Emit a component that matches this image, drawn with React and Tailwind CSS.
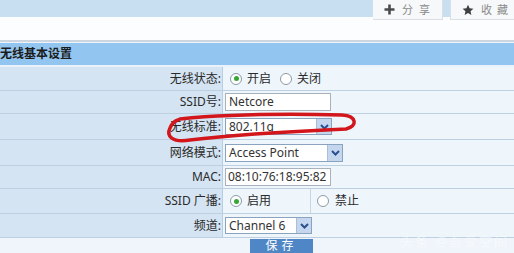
import React from "react";

function Radio({ checked }) {
  return (
    <span className="w-[12px] h-[12px] rounded-full border border-[#8d9aa6] bg-white flex items-center justify-center shrink-0">
      {checked ? <span className="w-[5px] h-[5px] rounded-full bg-[#33a833]" /> : null}
    </span>
  );
}

function Arrow() {
  return (
    <span className="w-[15px] h-full bg-[#c5d7ee] border-l border-[#a8bedb] flex items-center justify-center">
      <svg width="9" height="6" viewBox="0 0 9 6">
        <path d="M1 1 L4.5 4.5 L8 1" fill="none" stroke="#2a4f8f" strokeWidth="2" />
      </svg>
    </span>
  );
}

function Select({ value, w, h }) {
  return (
    <div className={`flex ${w} ${h} border border-[#8aa3bf] bg-white items-stretch`}>
      <span className="flex-1 pl-[3px] flex items-center leading-none text-[#333]">{value}</span>
      <Arrow />
    </div>
  );
}

function Row({ label, h, children }) {
  return (
    <div className={`flex ${h} border-b border-[#bdd0e1]`}>
      <div className="w-[223px] shrink-0 bg-[#d4e4f2] border-r border-[#b9cde0] flex items-center justify-end pr-[1px] leading-none">
        {label}
      </div>
      <div className="flex-1 bg-[#eef5fb] flex items-center pl-[2px]">{children}</div>
    </div>
  );
}

export default function App() {
  return (
    <div className="relative w-[514px] h-[253px] overflow-hidden bg-[#eff5fa] text-[12px] text-[#2a2a2a] font-['Noto_Sans','Noto_Sans_CJK_SC',sans-serif]">
      {/* top strip */}
      <div className="h-[17px] bg-[#c7dff1]" />
      <div className="h-[23px] bg-[#fbfdfe]" />
      <div className="h-[2px] bg-[#cdd6de]" />
      <div className="h-[1px] bg-[#eef4f9]" />
      <div className="h-[22px] bg-[#93c5f1] flex items-center">
        <span className="ml-0 font-bold text-[12px] leading-none text-[#1c1c1c] whitespace-nowrap">无线基本设置</span>
      </div>
      <div className="h-[2px] bg-[#e9f2fa]" />

      <Row label="无线状态:" h="h-[24px]">
        <div className="flex items-center ml-[5px]">
          <Radio checked />
          <span className="ml-[5px] leading-none">开启</span>
          <span className="ml-[9px]"><Radio /></span>
          <span className="ml-[5px] leading-none">关闭</span>
        </div>
      </Row>
      <Row label="SSID号:" h="h-[23px]">
        <div className="w-[106px] h-[18px] border border-[#a9b2ba] bg-white pl-[3px] flex items-center leading-none text-[#333]">Netcore</div>
      </Row>
      <Row label="无线标准:" h="h-[26px]">
        <Select value="802.11g" w="w-[107px]" h="h-[17px]" />
      </Row>
      <Row label="网络模式:" h="h-[26px]">
        <Select value="Access Point" w="w-[118px]" h="h-[18px]" />
      </Row>
      <Row label="MAC:" h="h-[23px]">
        <div className="w-[106px] h-[18px] border border-[#a9b2ba] bg-white pl-[2px] flex items-center leading-none text-[#333]">08:10:76:18:95:82</div>
      </Row>
      <div className="flex h-[25px] border-b border-[#bdd0e1]">
        <div className="w-[223px] shrink-0 bg-[#d4e4f2] border-r border-[#b9cde0] flex items-center justify-end pr-[1px] leading-none">
          SSID 广播:
        </div>
        <div className="w-[88px] shrink-0 bg-[#eef5fb] border-r border-[#c6d6e4] flex items-center pl-[7px]">
          <Radio checked />
          <span className="ml-[5px] leading-none">启用</span>
        </div>
        <div className="flex-1 bg-[#eef5fb] flex items-center pl-[6px]">
          <Radio />
          <span className="ml-[6px] leading-none">禁止</span>
        </div>
      </div>
      <Row label="频道:" h="h-[24px]">
        <Select value="Channel 6" w="w-[87px]" h="h-[17px]" />
      </Row>

      <div className="h-[15px] flex">
        <div className="ml-[250px] mt-[1px] w-[63px] h-[20px] bg-[#4f86c6] text-white flex justify-center pt-[1px] leading-none tracking-[4px]">
          保存
        </div>
      </div>

      {/* top-right buttons */}
      <div className="absolute top-0 left-[373px] w-[70px] h-[20px] bg-[#f6f8fa] border-b border-r border-[#d9dfe4] flex items-center pl-[11px] text-[#8a8a8a] text-[11px] leading-none whitespace-nowrap">
        <svg width="11" height="11" viewBox="0 0 11 11">
          <path d="M5.5 0.5 V10.5 M0.5 5.5 H10.5" stroke="#4a4a4a" strokeWidth="2.6" />
        </svg>
        <span className="ml-[7px] tracking-[6px]">分享</span>
      </div>
      <div className="absolute top-0 left-[450px] w-[64px] h-[20px] bg-[#f6f8fa] border-b border-l border-[#d9dfe4] flex items-center pl-[11px] text-[#8a8a8a] text-[11px] leading-none whitespace-nowrap">
        <svg width="12" height="12" viewBox="0 0 24 24" className="shrink-0">
          <path d="M12 1.5l3.2 7 7.6.8-5.7 5.1 1.6 7.5L12 18l-6.7 3.9 1.6-7.5L1.2 9.3l7.6-.8z" fill="#3f3f3f" />
        </svg>
        <span className="ml-[7px] tracking-[5px]">收藏</span>
      </div>

      {/* watermark */}
      <div className="absolute left-[400px] top-[235px] text-[13px] leading-none text-white/50 tracking-[2px] whitespace-nowrap">
        头条 @吾爱空间
      </div>

      {/* red hand-drawn ellipse */}
      <svg className="absolute inset-0 pointer-events-none" width="514" height="253" viewBox="0 0 514 253">
        <path
          d="M180 119 C230 114 300 114 342 115 C357 116 358 126 346 129 C300 131 230 135 190 140 C172 143 166 136 170 128 C172 123 175 121 178 120"
          fill="none"
          stroke="#d2161c"
          strokeWidth="3.5"
          strokeLinecap="round"
        />
      </svg>
    </div>
  );
}
